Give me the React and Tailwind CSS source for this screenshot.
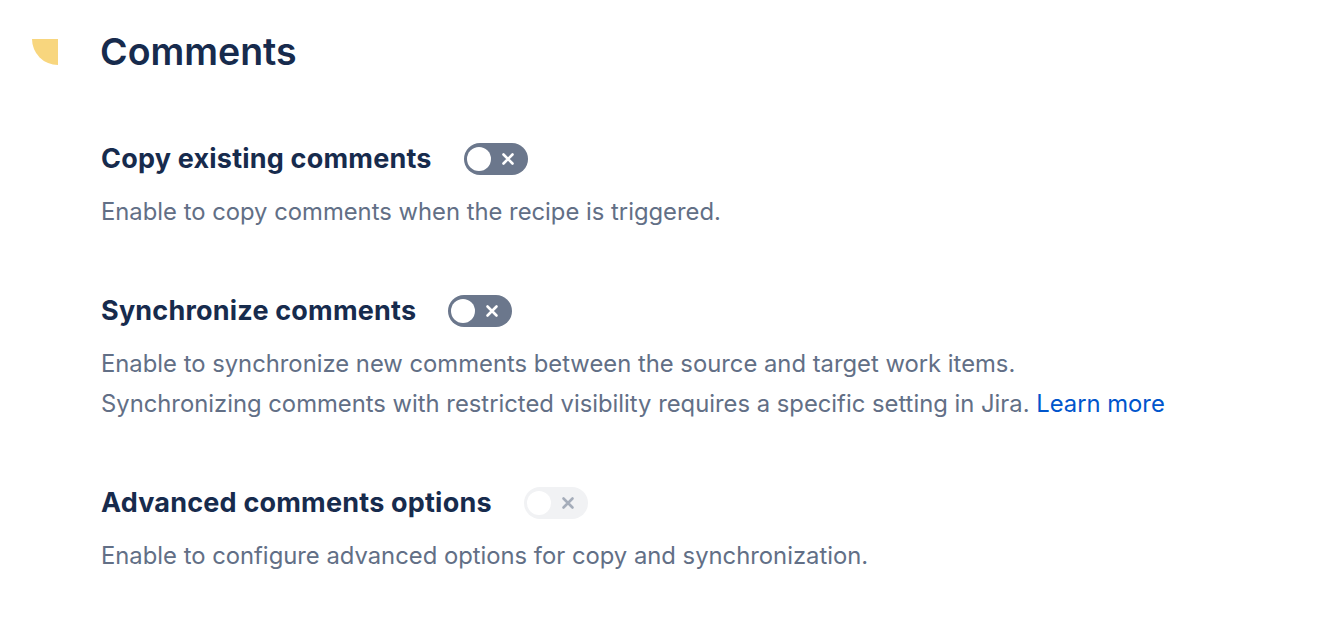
import React from "react";

function Toggle({ disabled }) {
  return (
    <div
      className={`flex h-8 w-16 items-center rounded-full px-[3px] ${
        disabled ? "bg-[#F1F2F4]" : "bg-[#6B778C]"
      }`}
    >
      <div className="h-6 w-6 rounded-full bg-white" />
      <div className="flex flex-1 items-center justify-center">
        <svg width="14" height="14" viewBox="0 0 14 14">
          <path
            d="M2.5 2.5 L11.5 11.5 M11.5 2.5 L2.5 11.5"
            stroke={disabled ? "#A5ADBA" : "#ffffff"}
            strokeWidth="2.6"
            strokeLinecap="round"
          />
        </svg>
      </div>
    </div>
  );
}

function Section({ title, disabled, children }) {
  return (
    <div className="flex flex-col">
      <div className="flex h-10 items-center">
        <h2 className="text-[27px] font-bold tracking-[0.2px] text-[#172B4D]">{title}</h2>
        <div className="ml-8">
          <Toggle disabled={disabled} />
        </div>
      </div>
      <div className="mt-[13px] text-[23.8px] leading-[40px] text-[#626F86]">{children}</div>
    </div>
  );
}

export default function App() {
  return (
    <div
      className="min-h-[640px] bg-white pt-[22px]"
      style={{ fontFamily: "Inter, 'Noto Sans', sans-serif" }}
    >
      <div className="flex items-center">
        <div className="ml-8 h-[26px] w-[26px] rounded-bl-[26px] bg-[#F8D67E]" />
        <h1 className="ml-[42px] text-[37.5px] font-semibold leading-[60px] text-[#172B4D]">
          Comments
        </h1>
      </div>
      <div className="ml-[101px] mt-[57px] flex flex-col gap-[59px]">
        <Section title="Copy existing comments">
          Enable to copy comments when the recipe is triggered.
        </Section>
        <Section title="Synchronize comments">
          <div>Enable to synchronize new comments between the source and target work items.</div>
          <div>
            Synchronizing comments with restricted visibility requires a specific setting in Jira.{" "}
            <a className="text-[#0055CC]">Learn more</a>
          </div>
        </Section>
        <Section title="Advanced comments options" disabled>
          Enable to configure advanced options for copy and synchronization.
        </Section>
      </div>
    </div>
  );
}
